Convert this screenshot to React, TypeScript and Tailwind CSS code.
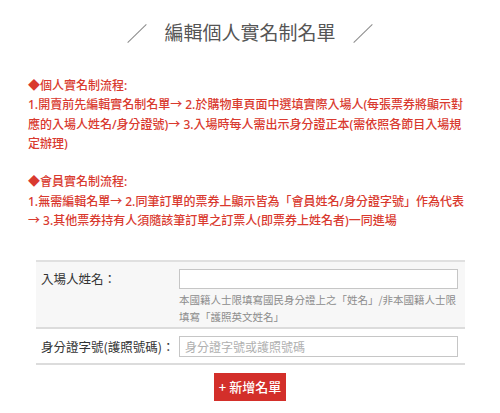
const font = { fontFamily: '"Noto Sans", "Noto Sans CJK TC", sans-serif' };
const cjk = { fontFamily: '"Noto Sans CJK TC", sans-serif' };

function Slash() {
  return <div className="w-[26px] h-px bg-[#8a8a8a] -rotate-[44deg]" />;
}

export default function App() {
  return (
    <div className="w-[500px] h-[413px] bg-white overflow-hidden" style={font}>
      {/* title */}
      <div className="flex items-center justify-center gap-[14px] pt-[20px] h-[46px]">
        <Slash />
        <h1 className="text-[19px] leading-[26px] text-[#555]">編輯個人實名制名單</h1>
        <Slash />
      </div>

      {/* rules */}
      <div className="mt-[30px] px-[28px] text-[12px] leading-[19.3px] font-medium text-[#d93a2f]">
        <p>◆個人實名制流程:</p>
        <p>
          1.開賣前先編輯實名制名單→ 2.於購物車頁面中選填實際入場人(每張票券將顯示對應的入場人姓名/身分證號)→ 3.入場時每人需出示身分證正本(需依照各節目入場規定辦理)
        </p>
        <p>&nbsp;</p>
        <p>◆會員實名制流程:</p>
        <p>
          1.無需編輯名單→ 2.同筆訂單的票券上顯示皆為「會員姓名/身分證字號」作為代表→ 3.其他票券持有人須隨該筆訂單之訂票人(即票券上姓名者)一同進場
        </p>
      </div>

      {/* form */}
      <div className="mt-[30px] ml-[36px] w-[429px] border-t-2 border-[#e0e0e0]" style={cjk}>
        <div className="flex h-[67px] bg-[#f7f7f7] border-b-2 border-[#dcdcdc] pt-[7px]">
          <label className="w-[143px] pl-[5px] text-[12.5px] leading-[20px] text-[#333]">入場人姓名：</label>
          <div className="flex-1 pr-[7px]">
            <input className="block w-full h-[20px] border border-[#c6c6c6] bg-white outline-none" />
            <p className="mt-[2px] text-[10.5px] leading-[17px] text-[#8c8c8c]">
              本國籍人士限填寫國民身分證上之「姓名」/非本國籍人士限填寫「護照英文姓名」
            </p>
          </div>
        </div>
        <div className="flex h-[36px] border-b-2 border-[#dcdcdc] pt-[7px]">
          <label className="w-[143px] pl-[5px] text-[12.5px] leading-[21px] text-[#333] whitespace-nowrap">身分證字號(護照號碼)：</label>
          <div className="flex-1 pr-[7px]">
            <input
              placeholder="身分證字號或護照號碼"
              className="block w-full h-[21px] border border-[#c6c6c6] bg-white px-[5px] text-[12px] placeholder:text-[#b0b0b0] outline-none"
            />
          </div>
        </div>
      </div>

      <div className="flex justify-center mt-[8px]">
        <button className="w-[72px] h-[28px] bg-[#d32f2a] text-white text-[13px] font-medium leading-[28px]" style={cjk}>
          + 新增名單
        </button>
      </div>
    </div>
  );
}
